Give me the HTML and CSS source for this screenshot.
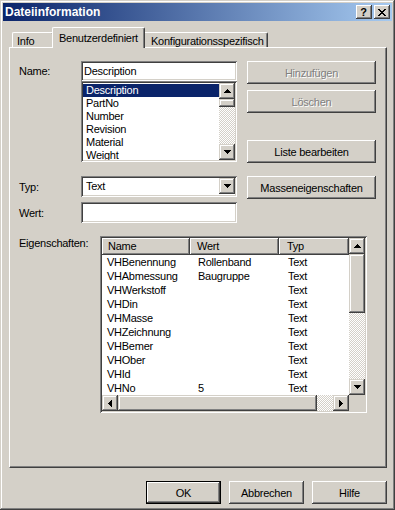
FILE: index.html
```html
<!DOCTYPE html>
<html lang="de">
<head>
  <meta charset="UTF-8" />
  <title>Dateiinformation</title>
  <link rel="stylesheet" href="styles.css">
</head>
<body>
  <svg class="defs" width="0" height="0">
    <symbol id="arr-up" viewBox="0 0 7 4"><path d="M3 0h1v1h1v1h1v1h1v1H0V3h1V2h1V1h1z"/></symbol>
    <symbol id="arr-down" viewBox="0 0 7 4"><path d="M0 0h7v1h-1v1h-1v1h-1v1h-1v-1h-1v-1h-1v-1H0z"/></symbol>
    <symbol id="arr-left" viewBox="0 0 4 7"><path d="M0 3h1v-1h1v-1h1v-1h1v7h-1v-1h-1v-1h-1v-1H0z"/></symbol>
    <symbol id="arr-right" viewBox="0 0 4 7"><path d="M0 0h1v1h1v1h1v1h1v1h-1v1h-1v1h-1v1H0z"/></symbol>
  </svg>

  <div class="window">
    <div class="titlebar">
      <span class="title">Dateiinformation</span>
      <div class="caption-buttons">
        <span class="cap-btn help">?</span>
        <span class="cap-btn">
          <svg width="8" height="7" viewBox="0 0 8 7"><path d="M0 0h2v1h1v1h2V1h1V0h2v1H7v1H6v1H5v1h1v1h1v1h1v1H6V6H5V5H3v1H2v1H0V6h1V5h1V4h1V3H2V2H1V1H0z"/></svg>
        </span>
      </div>
    </div>

    <div class="tabs">
      <div class="tab tab-info">Info</div>
      <div class="tab tab-custom active">Benutzerdefiniert</div>
      <div class="tab tab-config">Konfigurationsspezifisch</div>
    </div>

    <div class="panel">
      <div class="upper">
        <div class="upper-left">
          <div class="field-row">
            <label>Name:</label>
            <div class="edit">Description</div>
          </div>
          <div class="listbox">
            <div class="items">
              <div class="item selected">Description</div>
              <div class="item">PartNo</div>
              <div class="item">Number</div>
              <div class="item">Revision</div>
              <div class="item">Material</div>
              <div class="item">Weight</div>
            </div>
            <div class="vscroll">
              <div class="sb-btn"><svg width="7" height="4"><use href="#arr-up"/></svg></div>
              <div class="sb-thumb small"></div>
              <div class="sb-track"></div>
              <div class="sb-btn"><svg width="7" height="4"><use href="#arr-down"/></svg></div>
            </div>
          </div>
          <div class="field-row typ-row">
            <label>Typ:</label>
            <div class="combo">
              <span class="combo-text">Text</span>
              <span class="sb-btn combo-btn"><svg width="7" height="4"><use href="#arr-down"/></svg></span>
            </div>
          </div>
          <div class="field-row wert-row">
            <label>Wert:</label>
            <div class="edit tall"></div>
          </div>
        </div>

        <div class="upper-right">
          <div class="btn disabled">Hinzufügen</div>
          <div class="btn disabled btn-delete">Löschen</div>
          <div class="btn btn-list">Liste bearbeiten</div>
          <div class="btn btn-mass">Masseneigenschaften</div>
        </div>
      </div>

      <div class="props">
        <label>Eigenschaften:</label>
        <div class="listview">
          <div class="lv-main">
            <div class="lv-header">
              <div class="col c1">Name</div>
              <div class="col c2">Wert</div>
              <div class="col c3">Typ</div>
            </div>
            <div class="lv-row"><span class="c1">VHBenennung</span><span class="c2">Rollenband</span><span class="c3">Text</span></div>
            <div class="lv-row"><span class="c1">VHAbmessung</span><span class="c2">Baugruppe</span><span class="c3">Text</span></div>
            <div class="lv-row"><span class="c1">VHWerkstoff</span><span class="c2"></span><span class="c3">Text</span></div>
            <div class="lv-row"><span class="c1">VHDin</span><span class="c2"></span><span class="c3">Text</span></div>
            <div class="lv-row"><span class="c1">VHMasse</span><span class="c2"></span><span class="c3">Text</span></div>
            <div class="lv-row"><span class="c1">VHZeichnung</span><span class="c2"></span><span class="c3">Text</span></div>
            <div class="lv-row"><span class="c1">VHBemer</span><span class="c2"></span><span class="c3">Text</span></div>
            <div class="lv-row"><span class="c1">VHOber</span><span class="c2"></span><span class="c3">Text</span></div>
            <div class="lv-row"><span class="c1">VHId</span><span class="c2"></span><span class="c3">Text</span></div>
            <div class="lv-row"><span class="c1">VHNo</span><span class="c2">5</span><span class="c3">Text</span></div>
          </div>
          <div class="vscroll">
            <div class="sb-btn"><svg width="7" height="4"><use href="#arr-up"/></svg></div>
            <div class="sb-thumb lv-vthumb"></div>
            <div class="sb-track"></div>
            <div class="sb-btn"><svg width="7" height="4"><use href="#arr-down"/></svg></div>
          </div>
          <div class="hscroll">
            <div class="sb-btn"><svg width="4" height="7"><use href="#arr-left"/></svg></div>
            <div class="sb-thumb lv-hthumb"></div>
            <div class="sb-track"></div>
            <div class="sb-btn"><svg width="4" height="7"><use href="#arr-right"/></svg></div>
          </div>
          <div class="corner"></div>
        </div>
      </div>
    </div>

    <div class="footer">
      <div class="btn default">OK</div>
      <div class="btn">Abbrechen</div>
      <div class="btn">Hilfe</div>
    </div>
  </div>
</body>
</html>
```

FILE: styles.css
```css
body {
  margin: 0;
  font-family: "Liberation Sans", Arial, sans-serif;
  font-size: 11px;
  letter-spacing: -0.25px;
  color: #000;
  background: #d4d0c8;
}
.defs {
  position: absolute;
}
.window {
  width: 395px;
  height: 510px;
  box-sizing: border-box;
  padding: 3px;
  background: #d4d0c8;
  box-shadow: inset -1px -1px #404040, inset 1px 1px #d4d0c8, inset -2px -2px #808080, inset 2px 2px #fff;
}

/* title bar */
.titlebar {
  height: 18px;
  display: flex;
  align-items: center;
  justify-content: space-between;
  padding: 0 2px 0 2px;
  background: linear-gradient(to right, #0a246a, #a6caf0);
  color: #fff;
}
.title {
  font-weight: bold;
  font-size: 12px;
  letter-spacing: 0;
}
.caption-buttons {
  display: flex;
  gap: 2px;
}
.cap-btn {
  width: 16px;
  height: 14px;
  box-sizing: border-box;
  display: flex;
  align-items: center;
  justify-content: center;
  background: #d4d0c8;
  color: #000;
  box-shadow: inset -1px -1px #404040, inset 1px 1px #fff, inset -2px -2px #808080;
}
.cap-btn.help {
  font-weight: bold;
  font-size: 11px;
  padding-right: 1px;
}

/* tabs */
.tabs {
  height: 26px;
  display: flex;
  align-items: flex-end;
  padding-left: 9px;
}
.tab {
  height: 15px;
  box-sizing: border-box;
  padding-top: 2px;
  line-height: 13px;
  border: 1px solid #fff;
  border-bottom: none;
  border-right-color: #404040;
  border-radius: 2px 2px 0 0;
  box-shadow: inset -1px 0 #808080;
  background: #d4d0c8;
  white-space: nowrap;
}
.tab-info {
  width: 42px;
  padding-left: 4px;
}
.tab-custom {
  width: 93px;
  padding-left: 6px;
}
.tab-config {
  width: 125px;
  padding-left: 7px;
}
.tab.active {
  height: 21px;
  padding-top: 4px;
  margin: 0 -2px -1px;
  position: relative;
  z-index: 1;
}

/* panel */
.panel {
  margin-left: 6px;
  width: 378px;
  height: 421px;
  box-sizing: border-box;
  padding: 13px 0 0 9px;
  border: 1px solid;
  border-color: #fff #404040 #404040 #fff;
  box-shadow: inset -1px -1px #808080;
}
.upper {
  display: flex;
}
.upper-left {
  width: 218px;
}
.field-row {
  display: flex;
  align-items: center;
}
.field-row label {
  width: 62px;
}
.typ-row {
  margin-top: 14px;
}
.wert-row {
  margin-top: 5px;
}
.edit {
  width: 156px;
  height: 20px;
  box-sizing: border-box;
  padding: 2px 3px;
  line-height: 16px;
  background: #fff;
  box-shadow: inset 1px 1px #808080, inset -1px -1px #fff, inset 2px 2px #404040, inset -2px -2px #d4d0c8;
}
.edit.tall {
  height: 21px;
}
.listbox {
  margin-left: 62px;
  width: 156px;
  height: 81px;
  box-sizing: border-box;
  padding: 2px;
  display: flex;
  background: #fff;
  box-shadow: inset 1px 1px #808080, inset -1px -1px #fff, inset 2px 2px #404040, inset -2px -2px #d4d0c8;
}
.items {
  flex: 1;
  padding-top: 1px;
  overflow: hidden;
}
.item {
  height: 13px;
  line-height: 13px;
  padding-left: 3px;
}
.item.selected {
  background: #0a246a;
  color: #fff;
}
.combo {
  width: 156px;
  height: 21px;
  box-sizing: border-box;
  padding: 2px;
  display: flex;
  align-items: stretch;
  background: #fff;
  box-shadow: inset 1px 1px #808080, inset -1px -1px #fff, inset 2px 2px #404040, inset -2px -2px #d4d0c8;
}
.combo-text {
  flex: 1;
  padding-left: 3px;
  line-height: 17px;
}
.combo-btn {
  width: 16px;
  height: auto;
}

/* scrollbars */
.vscroll {
  width: 16px;
  display: flex;
  flex-direction: column;
}
.hscroll {
  height: 16px;
  display: flex;
}
.sb-btn {
  width: 16px;
  height: 16px;
  flex: none;
  box-sizing: border-box;
  display: flex;
  align-items: center;
  justify-content: center;
  background: #d4d0c8;
  box-shadow: inset -1px -1px #404040, inset 1px 1px #d4d0c8, inset -2px -2px #808080, inset 2px 2px #fff;
}
.sb-thumb {
  flex: none;
  background: #d4d0c8;
  box-shadow: inset -1px -1px #404040, inset 1px 1px #d4d0c8, inset -2px -2px #808080, inset 2px 2px #fff;
}
.sb-thumb.small {
  height: 8px;
}
.lv-vthumb {
  height: 59px;
}
.lv-hthumb {
  width: 199px;
}
.sb-track {
  flex: 1;
  background: repeating-conic-gradient(#d4d0c8 0 25%, #fff 0 50%) 0 0 / 2px 2px;
}
.corner {
  background: #d4d0c8;
}

/* buttons */
.upper-right {
  margin-left: 10px;
  width: 129px;
  display: flex;
  flex-direction: column;
}
.btn {
  height: 23px;
  box-sizing: border-box;
  display: flex;
  align-items: center;
  justify-content: center;
  background: #d4d0c8;
  box-shadow: inset -1px -1px #404040, inset 1px 1px #fff, inset -2px -2px #808080;
}
.btn.disabled {
  color: #808080;
  text-shadow: 1px 1px #fff;
}
.btn-delete {
  margin-top: 6px;
}
.btn-list {
  margin-top: 27px;
}
.btn-mass {
  margin-top: 13px;
}
.btn.default {
  border: 1px solid #000;
}

/* properties list */
.props {
  display: flex;
  margin-top: 13px;
}
.props label {
  width: 81px;
  padding-top: 1px;
  line-height: 13px;
}
.listview {
  width: 267px;
  height: 177px;
  box-sizing: border-box;
  padding: 2px;
  display: grid;
  grid-template-columns: 247px 16px;
  grid-template-rows: 157px 16px;
  background: #fff;
  box-shadow: inset 1px 1px #808080, inset -1px -1px #fff, inset 2px 2px #404040, inset -2px -2px #d4d0c8;
}
.lv-main {
  overflow: hidden;
}
.lv-header {
  display: flex;
  height: 17px;
}
.lv-header .col {
  box-sizing: border-box;
  line-height: 17px;
  background: #d4d0c8;
  box-shadow: inset -1px -1px #404040, inset 1px 1px #fff, inset -2px -2px #808080;
}
.c1 {
  width: 88px;
  padding-left: 5px;
}
.c2 {
  width: 89px;
  padding-left: 8px;
}
.c3 {
  width: 70px;
  padding-left: 9px;
}
.lv-header .c1 {
  padding-left: 6px;
}
.lv-header .c2 {
  padding-left: 7px;
}
.lv-header .c3 {
  padding-left: 8px;
}
.lv-row {
  display: flex;
  height: 14px;
  line-height: 14px;
}
.lv-row span {
  box-sizing: border-box;
  white-space: nowrap;
}

/* footer */
.footer {
  display: flex;
  justify-content: flex-end;
  gap: 8px;
  margin-top: 13px;
  padding-right: 5px;
}
.footer .btn {
  width: 75px;
}
```
